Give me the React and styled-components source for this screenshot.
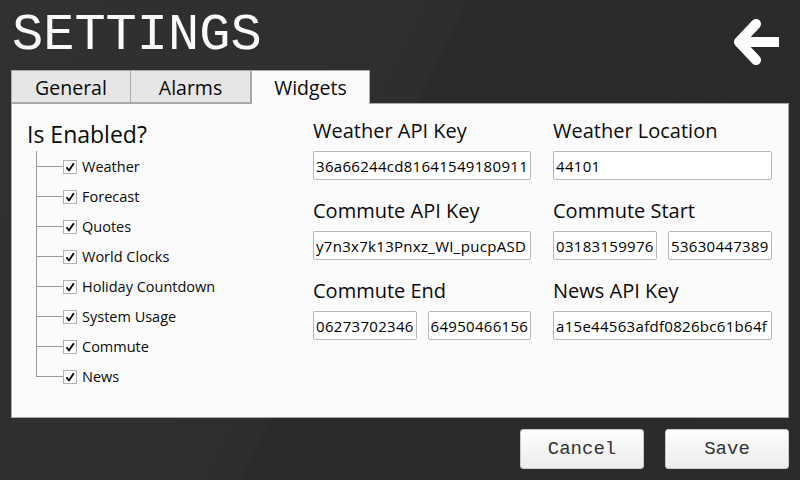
import React from "react";
import styled, { createGlobalStyle } from "styled-components";

const GlobalStyle = createGlobalStyle`
  html, body {
    margin: 0;
    padding: 0;
    background: #2c2c2c;
  }
  * { box-sizing: border-box; }
`;

const Screen = styled.div`
  width: 800px;
  height: 480px;
  overflow: hidden;
  background: linear-gradient(115deg, #313131 0%, #2e2e2e 45%, #2a2a2a 46%, #2b2b2b 100%);
  font-family: "Open Sans", "Noto Sans", sans-serif;
  color: #0a0a0a;
  display: flex;
  flex-direction: column;
`;

const Header = styled.div`
  height: 70px;
  display: flex;
  justify-content: space-between;
  align-items: flex-start;
  padding: 10px 18px 0 12px;
`;

const Title = styled.h1`
  margin: 0;
  font-family: "Liberation Mono", "Courier New", monospace;
  font-weight: normal;
  font-size: 52px;
  line-height: 52px;
  color: #fafafa;
`;

const BackButton = styled.button`
  margin-top: 8px;
  width: 50px;
  height: 50px;
  padding: 0;
  border: none;
  background: transparent;
  cursor: pointer;
`;

const TabBar = styled.div`
  display: flex;
  padding-left: 11px;
  height: 33px;
  align-items: flex-end;
`;

const Tab = styled.div`
  width: ${p => (p.$active ? "119px" : "120px")};
  height: ${p => (p.$active ? "34px" : "33px")};
  margin-bottom: ${p => (p.$active ? "-1px" : "0")};
  background: ${p => (p.$active ? "#fbfbfb" : "#e6e6e6")};
  border: 1px solid #a8a8a8;
  border-bottom: ${p => (p.$active ? "none" : "1px solid #a8a8a8")};
  border-left: ${p => (p.$first || p.$active ? "1px solid #a8a8a8" : "none")};
  font-size: 19.5px;
  display: flex;
  align-items: center;
  justify-content: center;
  padding-top: ${p => (p.$active ? "0" : "1px")};
  position: relative;
  z-index: ${p => (p.$active ? 2 : 1)};
`;

const Panel = styled.div`
  margin-left: 11px;
  width: 778px;
  height: 315px;
  background: #fbfbfb;
  border: 1px solid #a8a8a8;
  display: flex;
  position: relative;
  z-index: 1;
`;

const EnabledColumn = styled.div`
  width: 301px;
  padding: 15px 0 0 15px;
`;

const EnabledTitle = styled.div`
  font-size: 23px;
  line-height: 30px;
  margin-bottom: 2px;
`;

const Tree = styled.ul`
  list-style: none;
  margin: 0 0 0 9px;
  padding: 0;
`;

const TreeItem = styled.li`
  position: relative;
  height: 30px;
  display: flex;
  align-items: center;
  padding-left: 27px;
  font-size: 14.5px;

  &::before {
    content: "";
    position: absolute;
    left: 0;
    top: 0;
    width: 1px;
    height: ${p => (p.$last ? "16px" : "30px")};
    background: #9a9a9a;
  }

  &::after {
    content: "";
    position: absolute;
    left: 0;
    top: 15px;
    width: 27px;
    height: 1px;
    background: #9a9a9a;
  }
`;

const CheckBox = styled.span`
  width: 14px;
  height: 14px;
  border: 1px solid #b0b0b0;
  background: #fff;
  display: flex;
  align-items: center;
  justify-content: center;
  margin-right: 5px;
  margin-top: 2px;
`;

const FieldGrid = styled.div`
  display: grid;
  grid-template-columns: 218px 219px;
  grid-auto-rows: 80px;
  column-gap: 22px;
  padding-top: 14px;
  align-content: start;
`;

const Field = styled.div`
  display: flex;
  flex-direction: column;
`;

const FieldLabel = styled.div`
  font-size: 20px;
  line-height: 26px;
  margin-bottom: 7px;
`;

const InputRow = styled.div`
  display: flex;
  gap: 11px;
`;

const TextInput = styled.input`
  flex: 1;
  min-width: 0;
  height: 29px;
  border: 1px solid #b8b8b8;
  border-radius: 2px;
  background: #fff;
  padding: 0 1px 0 2px;
  font-family: "Open Sans", "Noto Sans", sans-serif;
  font-size: 15px;
  letter-spacing: 0.3px;
  color: #000;
  outline: none;
`;

const Footer = styled.div`
  display: flex;
  justify-content: flex-end;
  gap: 21px;
  padding: 11px 11px 0 0;
`;

const ActionButton = styled.button`
  width: 124px;
  height: 40px;
  border: 1px solid #c8c8c8;
  border-radius: 3px;
  background: linear-gradient(#ffffff, #ececec);
  font-family: "Liberation Mono", "Courier New", monospace;
  font-size: 19px;
  color: #333;
  cursor: pointer;
`;

const widgets = [
  "Weather",
  "Forecast",
  "Quotes",
  "World Clocks",
  "Holiday Countdown",
  "System Usage",
  "Commute",
  "News",
];

const fields = [
  { label: "Weather API Key", values: ["36a66244cd81641549180911"] },
  { label: "Weather Location", values: ["44101"] },
  { label: "Commute API Key", values: ["y7n3x7k13Pnxz_WI_pucpASD"] },
  { label: "Commute Start", values: ["03183159976", "53630447389"] },
  { label: "Commute End", values: ["06273702346", "64950466156"] },
  { label: "News API Key", values: ["a15e44563afdf0826bc61b64f"] },
];

function BackArrow() {
  return (
    <svg width="50" height="50" viewBox="0 0 50 50">
      <path d="M24 6 L7 24 L24 42" fill="none" stroke="#fff" strokeWidth="10" strokeLinecap="round" strokeLinejoin="round" />
      <path d="M8 24 H47" fill="none" stroke="#fff" strokeWidth="10" />
    </svg>
  );
}

function Tick() {
  return (
    <svg width="10" height="10" viewBox="0 0 10 10">
      <path d="M1.5 5.2 L4 8.5 L8.8 1.2" fill="none" stroke="#000" strokeWidth="1.8" strokeLinejoin="round" />
    </svg>
  );
}

export default function App() {
  return (
    <Screen>
      <GlobalStyle />
      <Header>
        <Title>SETTINGS</Title>
        <BackButton aria-label="Back">
          <BackArrow />
        </BackButton>
      </Header>
      <TabBar>
        <Tab $first>General</Tab>
        <Tab>Alarms</Tab>
        <Tab $active>Widgets</Tab>
      </TabBar>
      <Panel>
        <EnabledColumn>
          <EnabledTitle>Is Enabled?</EnabledTitle>
          <Tree>
            {widgets.map((w, i) => (
              <TreeItem key={w} $last={i === widgets.length - 1}>
                <CheckBox><Tick /></CheckBox>
                {w}
              </TreeItem>
            ))}
          </Tree>
        </EnabledColumn>
        <FieldGrid>
          {fields.map(f => (
            <Field key={f.label}>
              <FieldLabel>{f.label}</FieldLabel>
              <InputRow>
                {f.values.map(v => (
                  <TextInput key={v} defaultValue={v} />
                ))}
              </InputRow>
            </Field>
          ))}
        </FieldGrid>
      </Panel>
      <Footer>
        <ActionButton>Cancel</ActionButton>
        <ActionButton>Save</ActionButton>
      </Footer>
    </Screen>
  );
}
